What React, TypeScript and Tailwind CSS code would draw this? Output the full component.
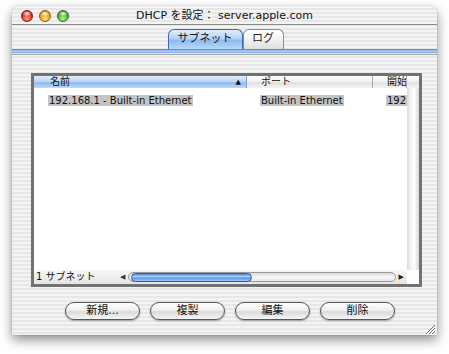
const font = "font-['DejaVu_Sans','Noto_Sans_CJK_JP',sans-serif]";
const stripes =
  "bg-[repeating-linear-gradient(180deg,#f4f4f4_0px,#f4f4f4_2px,#e7e7e7_2px,#e7e7e7_4px)]";
const headCell = "bg-[linear-gradient(180deg,#ffffff_0%,#efefef_50%,#e0e0e0_55%,#f4f4f4_100%)]";

function Light({ tone }: { tone: "red" | "amber" | "green" }) {
  const fill = {
    red: "bg-[radial-gradient(ellipse_45%_28%_at_50%_25%,rgba(255,255,255,0.95),rgba(255,255,255,0)),radial-gradient(circle_at_50%_75%,#ff9a86,#dc3520_55%,#8e1306)] border-[#7d1d12]",
    amber: "bg-[radial-gradient(ellipse_45%_28%_at_50%_25%,rgba(255,255,255,0.95),rgba(255,255,255,0)),radial-gradient(circle_at_50%_75%,#ffe08a,#f0a21a_55%,#a45a05)] border-[#8a5a10]",
    green: "bg-[radial-gradient(ellipse_45%_28%_at_50%_25%,rgba(255,255,255,0.95),rgba(255,255,255,0)),radial-gradient(circle_at_50%_75%,#b6f28e,#4eb22a_55%,#1d6a0b)] border-[#2f6a1c]",
  }[tone];
  return <div className={`h-[12px] w-[12px] rounded-full border ${fill}`} />;
}

function Pill({ label }: { label: string }) {
  return (
    <div className="flex h-[18px] w-[75px] items-center justify-center rounded-full border border-[#555] bg-[linear-gradient(180deg,#ffffff_0%,#f0f0f0_45%,#dadada_55%,#f6f6f6_100%)] text-[11px] text-[#111] shadow-[0_1px_2px_rgba(0,0,0,0.35)]">
      {label}
    </div>
  );
}

export default function App() {
  return (
    <div className={`h-[354px] w-[449px] bg-white pl-[12px] pt-[6px] ${font}`}>
      <div
        className={`flex h-[329px] w-[425px] flex-col overflow-hidden rounded-t-[6px] ${stripes} shadow-[0_5px_12px_rgba(0,0,0,0.45),0_0_1px_rgba(0,0,0,0.5)]`}
      >
        {/* title bar */}
        <div className="grid h-[19px] grid-cols-[1fr_auto_1fr] items-center border-b border-[#8a8a8a]">
          <div className="flex items-center gap-[6px] pl-[9px] pt-[1px]">
            <Light tone="red" />
            <Light tone="amber" />
            <Light tone="green" />
          </div>
          <div className="text-[11px] leading-none text-[#111]">DHCP を設定： server.apple.com</div>
          <div />
        </div>

        {/* tabs */}
        <div className="flex h-[24px] items-end justify-center pl-[2px]">
          <div className="flex h-[20px] w-[75px] items-center justify-center rounded-t-[6px] border border-b-0 border-[#3b6cb3] bg-[linear-gradient(180deg,#e2eefc_0%,#b4d2f5_45%,#8dbaee_55%,#b9d8fa_100%)] text-[11px] text-[#111]">
            サブネット
          </div>
          <div className="flex h-[20px] w-[41px] items-center justify-center rounded-t-[6px] border border-b-0 border-[#8c8c8c] bg-[linear-gradient(180deg,#ffffff_0%,#f2f2f2_50%,#dedede_100%)] text-[11px] text-[#222]">
            ログ
          </div>
        </div>
        <div className="h-[4px] bg-[linear-gradient(180deg,#3f72c2_0%,#9fc3f1_40%,#a9cbf4_70%,#6f9bda_100%)]" />
        <div className="mt-[1px] h-[1px] bg-[#a3a3a3]" />

        {/* list */}
        <div className="ml-[19px] mt-[18px] flex h-[214px] w-[391px] flex-col border-[3px] border-[#727272] bg-white">
          <div className="flex h-[12px] whitespace-nowrap text-[10px] leading-[12px] text-[#111]">
            <div className="relative flex w-[213px] items-center border-r border-[#8a9fbf] bg-[linear-gradient(180deg,#e3eefc_0%,#b7d3f5_50%,#8fbaee_55%,#bcd9f9_100%)] pl-[16px]">
              名前
              <span className="absolute right-[5px] top-0 text-[7px]">▲</span>
            </div>
            <div className={`flex w-[126px] items-center border-r border-[#a8a8a8] pl-[14px] ${headCell}`}>
              ポート
            </div>
            <div className={`flex w-[34px] items-center overflow-hidden border-r border-[#a8a8a8] pl-[14px] ${headCell}`}>
              開始
            </div>
            <div className={`flex-1 ${headCell}`} />
          </div>

          <div className="flex flex-1">
            <div className="flex-1 overflow-hidden pt-[7px] text-[10px] leading-[11px] text-[#111]">
              <div className="flex whitespace-nowrap">
                <div className="w-[213px] pl-[14px]">
                  <span className="bg-[#c4c4c4] px-[1px]">192.168.1 - Built-in Ethernet</span>
                </div>
                <div className="w-[126px] pl-[13px]">
                  <span className="bg-[#c4c4c4] px-[1px]">Built-in Ethernet</span>
                </div>
                <div className="w-[34px] overflow-hidden pl-[13px]">
                  <span className="bg-[#c4c4c4] px-[1px]">192</span>
                </div>
              </div>
            </div>
            <div className="w-[12px] bg-[linear-gradient(90deg,#dcdcdc_0%,#f4f4f4_35%,#ffffff_60%,#d6d6d6_100%)]" />
          </div>

          <div className="flex h-[14px] items-center bg-[linear-gradient(180deg,#f8f8f8,#e4e4e4)]">
            <div className="w-[86px] whitespace-nowrap pl-[2px] text-[10px] leading-none text-[#111]">1 サブネット</div>
            <div className="flex flex-1 items-center gap-[3px] pr-[3px]">
              <span className="text-[7px] leading-none text-[#333]">◀</span>
              <div className="flex h-[10px] flex-1 items-center rounded-full border border-[#9a9a9a] bg-[linear-gradient(180deg,#d8d8d8,#fafafa_50%,#e6e6e6)]">
                <div className="ml-[2px] h-[9px] w-[121px] rounded-full border border-[#2a5da8] bg-[linear-gradient(180deg,#4a86d8_0%,#a8cffa_35%,#5b97e4_60%,#9ccbfb_100%)]" />
              </div>
              <span className="text-[7px] leading-none text-[#222]">▶</span>
            </div>
            <div className="h-full w-[12px] bg-white" />
          </div>
        </div>

        {/* buttons */}
        <div className="mt-[15px] flex gap-[10px] pl-[53px]">
          <Pill label="新規..." />
          <Pill label="複製" />
          <Pill label="編集" />
          <Pill label="削除" />
        </div>

        <div className="mt-[4px] flex justify-end pr-[1px]">
          <svg width="11" height="10" viewBox="0 0 11 10">
            <path d="M10 1 L1 10 M10 4 L4 10 M10 7 L7 10" stroke="#777" strokeWidth="1" />
            <path d="M11 2 L2 11 M11 5 L5 11 M11 8 L8 11" stroke="#fff" strokeWidth="1" />
          </svg>
        </div>
      </div>
    </div>
  );
}
